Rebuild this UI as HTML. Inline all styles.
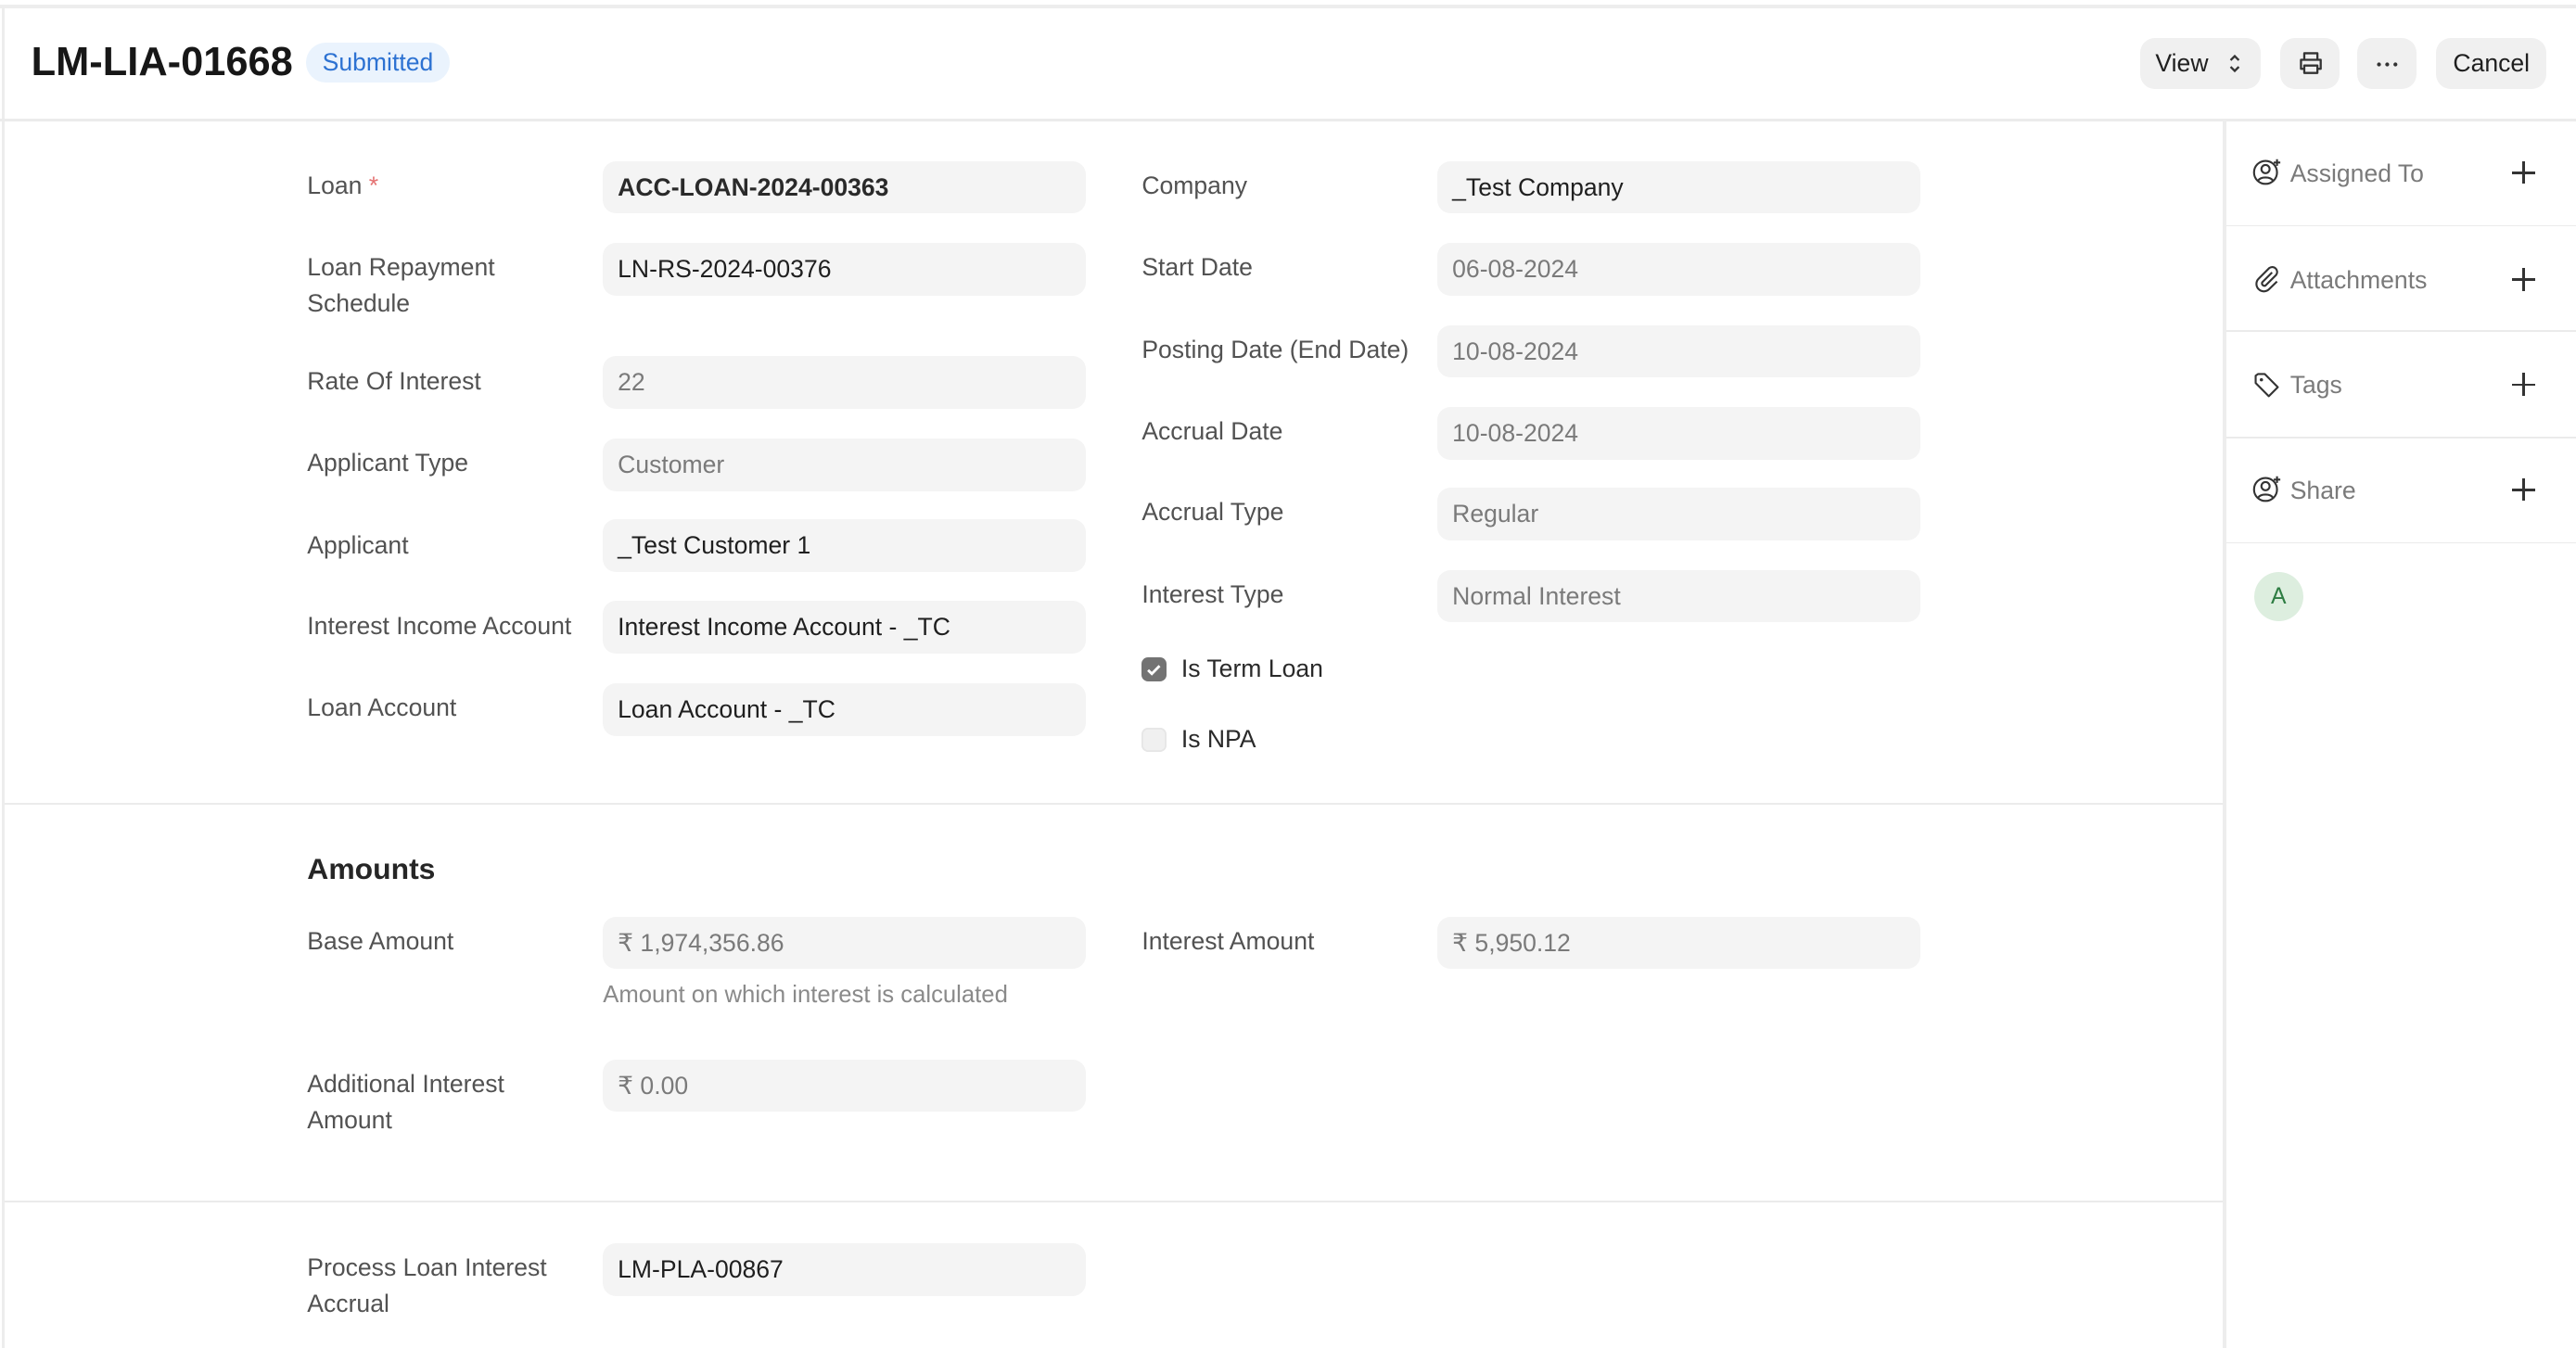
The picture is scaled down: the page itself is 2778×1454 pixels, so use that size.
<!DOCTYPE html>
<html><head><meta charset="utf-8"><style>
html,body{margin:0;padding:0;background:#fff;overflow:hidden}
body{width:2778px;height:1454px}
#r{zoom:1.77168;position:relative;width:1568px;height:821px;font-family:"Liberation Sans",sans-serif;color:#383838;font-size:15px}
.a{position:absolute}
.l{position:absolute;line-height:22px;color:#525252;font-size:15px}
.i{position:absolute;height:32px;width:294px;background:#f4f4f4;border-radius:8px;line-height:32px;padding-left:9px;box-sizing:border-box;color:#7a7a7a;font-size:15px}
.d{color:#1f1f1f}
.hl{position:absolute;height:1px;background:#ebebeb}
.btn{position:absolute;top:23px;height:31px;background:#f0f0f0;border-radius:9px;line-height:31px;text-align:center;color:#1f1f1f;font-size:15px}
.side{position:absolute;left:1372px;color:#7a7a7a;font-size:15px}
.plus{position:absolute;left:1529px;width:14px;height:14px}
.plus:before{content:"";position:absolute;left:0;top:6.5px;width:14px;height:1.5px;background:#333}
.plus:after{content:"";position:absolute;left:6.3px;top:0;width:1.5px;height:14px;background:#333}
</style></head><body><div id="r">
<div class="hl" style="left:0;top:3px;width:1568px;height:2px;background:#ededed"></div>
<div class="a" style="left:1px;top:4px;width:2px;height:817px;background:#ededed"></div>
<div class="a" style="left:19px;top:23px;font-size:24.5px;font-weight:bold;color:#171717;line-height:30px">LM-LIA-01668</div>
<div class="a" style="left:186px;top:26px;width:88px;height:24px;border-radius:12px;background:#eaf3fd;color:#2d72d2;font-size:15px;line-height:24px;text-align:center">Submitted</div>
<div class="btn" style="left:1303px;width:73px;text-align:left"><span style="margin-left:9px">View</span><svg class="a" style="left:53px;top:9px" width="9" height="13" viewBox="0 0 9 13"><path d="M2 4.5L4.5 2 7 4.5M2 8.5L4.5 11 7 8.5" fill="none" stroke="#333" stroke-width="1.3"/></svg></div>
<div class="btn" style="left:1388px;width:36px"><svg class="a" style="left:10px;top:7px" width="17" height="17" viewBox="0 0 17 17"><path d="M4.5 6V2.5h8V6M4 12H2.5V6.5h12V12H13M4.5 10h8v4.5h-8z" fill="none" stroke="#333" stroke-width="1.3" stroke-linejoin="round"/></svg></div>
<div class="btn" style="left:1435px;width:36px"><svg class="a" style="left:11px;top:14px" width="14" height="4"><circle cx="2" cy="2" r="1.2" fill="#333"/><circle cx="7" cy="2" r="1.2" fill="#333"/><circle cx="12" cy="2" r="1.2" fill="#333"/></svg></div>
<div class="btn" style="left:1483px;width:67px">Cancel</div>
<div class="hl" style="left:0;top:72px;width:1568px;height:2px"></div>
<div class="a" style="left:1353px;top:73px;width:2px;height:748px;background:#ededed"></div>
<svg class="a" style="left:1371px;top:96px" width="19" height="18" viewBox="0 0 19 18"><circle cx="8" cy="9" r="7" fill="none" stroke="#333" stroke-width="1.2"/><circle cx="8" cy="7" r="2.5" fill="none" stroke="#333" stroke-width="1.2"/><path d="M3.5 14c1.5-2.5 7.5-2.5 9 0" fill="none" stroke="#333" stroke-width="1.2"/><path d="M15 1v4M13 3h4" stroke="#333" stroke-width="1.2"/></svg>
<div class="side" style="left:1394px;top:97px">Assigned To</div><div class="plus" style="top:98px"></div>
<div class="hl" style="left:1355px;top:137px;width:213px"></div>
<svg class="a" style="left:1371px;top:161px" width="18" height="18" viewBox="0 0 18 18"><path d="M12 5l-6 6a1.5 1.5 0 0 0 2 2l6.5-6.5a3 3 0 0 0-4.2-4.2L3.8 8.8a4.5 4.5 0 0 0 6.4 6.4L15 10.5" fill="none" stroke="#333" stroke-width="1.2"/></svg>
<div class="side" style="left:1394px;top:162px">Attachments</div><div class="plus" style="top:163px"></div>
<div class="hl" style="left:1355px;top:201px;width:213px"></div>
<svg class="a" style="left:1371px;top:225px" width="18" height="18" viewBox="0 0 18 18"><path d="M2 3.5V8l8 8 5.5-5.5-8-8H3.5z" fill="none" stroke="#333" stroke-width="1.2" stroke-linejoin="round"/><circle cx="5.5" cy="6" r="1" fill="#333"/></svg>
<div class="side" style="left:1394px;top:226px">Tags</div><div class="plus" style="top:227px"></div>
<div class="hl" style="left:1355px;top:266px;width:213px"></div>
<svg class="a" style="left:1371px;top:289px" width="19" height="18" viewBox="0 0 19 18"><circle cx="8" cy="9" r="7" fill="none" stroke="#333" stroke-width="1.2"/><circle cx="8" cy="7" r="2.5" fill="none" stroke="#333" stroke-width="1.2"/><path d="M3.5 14c1.5-2.5 7.5-2.5 9 0" fill="none" stroke="#333" stroke-width="1.2"/><path d="M15 1v4M13 3h4" stroke="#333" stroke-width="1.2"/></svg>
<div class="side" style="left:1394px;top:290px">Share</div><div class="plus" style="top:291px"></div>
<div class="hl" style="left:1355px;top:330px;width:213px"></div>
<div class="a" style="left:1372px;top:348px;width:30px;height:30px;border-radius:15px;background:#ddeedf;color:#2e7d43;text-align:center;line-height:30px;font-size:14px">A</div>
<div class="l" style="left:187px;top:102px">Loan <span style="color:#e57373">*</span></div>
<div class="i d" style="left:367px;top:98px;font-weight:bold;color:#2a2a2a">ACC-LOAN-2024-00363</div>
<div class="l" style="left:187px;top:152px">Loan Repayment<br>Schedule</div>
<div class="i d" style="left:367px;top:148px">LN-RS-2024-00376</div>
<div class="l" style="left:187px;top:221px">Rate Of Interest</div>
<div class="i" style="left:367px;top:217px">22</div>
<div class="l" style="left:187px;top:271px">Applicant Type</div>
<div class="i" style="left:367px;top:267px">Customer</div>
<div class="l" style="left:187px;top:321px">Applicant</div>
<div class="i d" style="left:367px;top:316px">_Test Customer 1</div>
<div class="l" style="left:187px;top:370px">Interest Income Account</div>
<div class="i d" style="left:367px;top:366px">Interest Income Account - _TC</div>
<div class="l" style="left:187px;top:420px">Loan Account</div>
<div class="i d" style="left:367px;top:416px">Loan Account - _TC</div>
<div class="l" style="left:695px;top:102px">Company</div>
<div class="i d" style="left:875px;top:98px">_Test Company</div>
<div class="l" style="left:695px;top:152px">Start Date</div>
<div class="i" style="left:875px;top:148px">06-08-2024</div>
<div class="l" style="left:695px;top:202px">Posting Date (End Date)</div>
<div class="i" style="left:875px;top:198px">10-08-2024</div>
<div class="l" style="left:695px;top:252px">Accrual Date</div>
<div class="i" style="left:875px;top:248px">10-08-2024</div>
<div class="l" style="left:695px;top:301px">Accrual Type</div>
<div class="i" style="left:875px;top:297px">Regular</div>
<div class="l" style="left:695px;top:351px">Interest Type</div>
<div class="i" style="left:875px;top:347px">Normal Interest</div>
<div class="a" style="left:695px;top:400px;width:15px;height:15px;border-radius:4px;background:#737373"><svg width="15" height="15"><path d="M4 7.8l2.3 2.2L11 5.2" fill="none" stroke="#fff" stroke-width="1.6"/></svg></div>
<div class="l" style="left:719px;top:396px;color:#2a2a2a">Is Term Loan</div>
<div class="a" style="left:695px;top:443px;width:15px;height:15px;border-radius:4px;background:#f0f0f0;box-shadow:inset 0 0 0 1px #e6e6e6"></div>
<div class="l" style="left:719px;top:439px;color:#2a2a2a">Is NPA</div>
<div class="hl" style="left:3px;top:489px;width:1350px"></div>
<div class="a" style="left:187px;top:517px;font-size:18px;font-weight:bold;color:#262626;line-height:24px">Amounts</div>
<div class="l" style="left:187px;top:562px">Base Amount</div>
<div class="i" style="left:367px;top:558px">₹ 1,974,356.86</div>
<div class="a" style="left:367px;top:596px;color:#8a8a8a;font-size:14.5px;line-height:20px">Amount on which interest is calculated</div>
<div class="l" style="left:695px;top:562px">Interest Amount</div>
<div class="i" style="left:875px;top:558px">₹ 5,950.12</div>
<div class="l" style="left:187px;top:649px">Additional Interest<br>Amount</div>
<div class="i" style="left:367px;top:645px">₹ 0.00</div>
<div class="hl" style="left:3px;top:731px;width:1350px"></div>
<div class="l" style="left:187px;top:761px">Process Loan Interest<br>Accrual</div>
<div class="i d" style="left:367px;top:757px">LM-PLA-00867</div>
</div></body></html>
